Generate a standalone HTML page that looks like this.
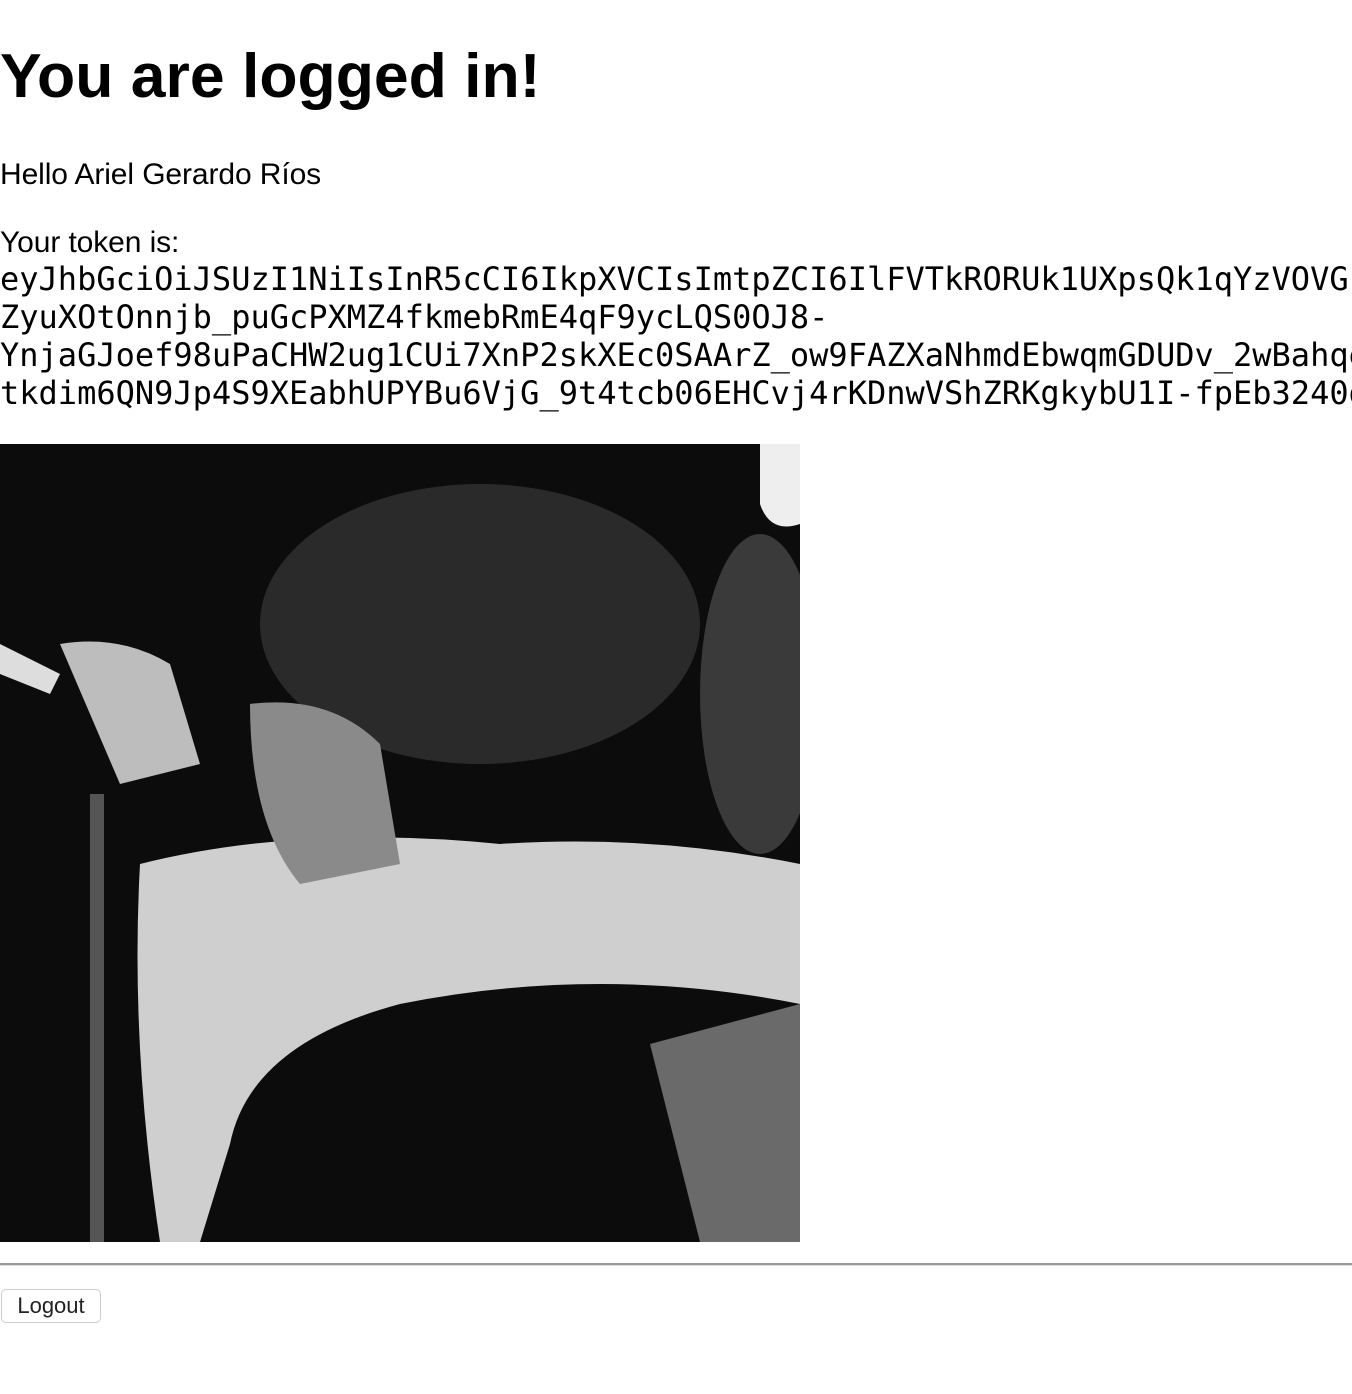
<!DOCTYPE html>
<html><head><meta charset="utf-8"><style>
html,body{margin:0;padding:0;background:#fff;width:1352px;height:1394px;overflow:hidden}
body{font-family:"Liberation Sans",sans-serif;color:#000}
h1{position:absolute;left:0;top:38px;margin:0;font-size:62.5px;font-weight:bold;letter-spacing:0;line-height:76px}
.p{position:absolute;left:0;font-size:30px;letter-spacing:-0.1px;line-height:36px}
.tok{position:absolute;left:0;top:260px;width:1352px;overflow:hidden;font-family:"DejaVu Sans Mono","Liberation Mono",monospace;font-size:32px;line-height:38px;white-space:nowrap}
.img{position:absolute;left:0;top:444px;width:800px;height:798px;background:#111}
hr{position:absolute;left:0;top:1263px;width:1352px;margin:0;border:0;border-top:2px solid #999;border-bottom:1px solid #ddd}
button{position:absolute;left:1px;top:1289px;width:100px;height:34px;background:#fff;border:1px solid #ccc;border-radius:5px;font-family:"Liberation Sans",sans-serif;font-size:22px;color:#222;padding:0}
</style></head><body>
<h1>You are logged in!</h1>
<div class="p" style="top:157px">Hello Ariel Gerardo Ríos</div>
<div class="p" style="top:225px">Your token is:</div>
<div class="tok">eyJhbGciOiJSUzI1NiIsInR5cCI6IkpXVCIsImtpZCI6IlFVTkRORUk1UXpsQk1qYzVOVGFDREVB<br>ZyuXOtOnnjb_puGcPXMZ4fkmebRmE4qF9ycLQS0OJ8-<br>YnjaGJoef98uPaCHW2ug1CUi7XnP2skXEc0SAArZ_ow9FAZXaNhmdEbwqmGDUDv_2wBahqeXYZ<br>tkdim6QN9Jp4S9XEabhUPYBu6VjG_9t4tcb06EHCvj4rKDnwVShZRKgkybU1I-fpEb3240dQWE</div>
<div class="img"><svg width="800" height="798" viewBox="0 0 800 798">
<rect width="800" height="798" fill="#0c0c0c"/>
<ellipse cx="480" cy="180" rx="220" ry="140" fill="#2a2a2a"/>
<ellipse cx="760" cy="250" rx="60" ry="160" fill="#3a3a3a"/>
<path d="M140 420 Q300 380 500 400 Q650 390 800 420 L800 560 Q600 520 400 560 Q250 600 230 700 L200 798 L160 798 Q130 600 140 420Z" fill="#cfcfcf"/>
<path d="M60 200 Q120 190 170 220 L200 320 L120 340 Z" fill="#bdbdbd"/>
<path d="M0 200 L60 230 L50 250 L0 230Z" fill="#ddd"/>
<path d="M250 260 Q330 250 380 300 L400 420 L300 440 Q250 380 250 260Z" fill="#8a8a8a"/>
<path d="M650 600 L800 560 L800 798 L700 798Z" fill="#6a6a6a"/>
<path d="M760 0 L800 0 L800 80 Q770 90 760 60Z" fill="#eee"/>
<rect x="90" y="350" width="14" height="448" fill="#555"/>
</svg></div>
<hr>
<button>Logout</button>
</body></html>
